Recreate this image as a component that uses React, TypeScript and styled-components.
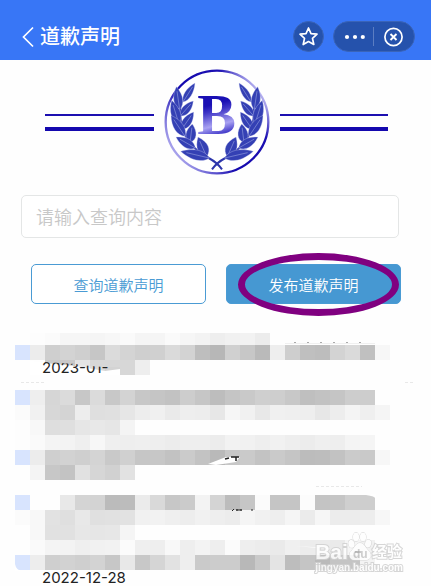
import React from 'react';
import styled, { createGlobalStyle } from 'styled-components';

const cjk = '"Noto Sans CJK SC", "Noto Sans", sans-serif';

const GlobalStyle = createGlobalStyle`
  * { box-sizing: border-box; }
  body { margin: 0; background: #fefefe; font-family: ${cjk}; overflow-x: hidden; }
  button, input { font-family: inherit; }
`;

const Page = styled.div`
  display: flex;
  flex-direction: column;
`;

const Header = styled.header`
  display: flex;
  align-items: center;
  justify-content: space-between;
  height: 60px;
  padding: 13px 16px 0 20px;
  background: #3876f6;
  color: #fff;
`;

const HeaderGroup = styled.div<{ $gap: number }>`
  display: flex;
  align-items: center;
  gap: ${(p) => p.$gap}px;
`;

const IconButton = styled.button<{ $width: number }>`
  display: flex;
  align-items: center;
  justify-content: center;
  width: ${(p) => p.$width}px;
  height: 31px;
  padding: 0;
  border: 0;
  background: transparent;
  color: #fff;
`;

const RoundButton = styled(IconButton)`
  border: 1px solid #3a64b8;
  border-radius: 50%;
  background: #2552ac;
`;

const Capsule = styled.div`
  display: flex;
  align-items: center;
  height: 31px;
  border: 1px solid #3a64b8;
  border-radius: 16px;
  background: #2552ac;
`;

const Divider = styled.span`
  width: 1px;
  height: 19px;
  background: #5b7dc2;
`;

const Title = styled.h1`
  margin: 0;
  padding-bottom: 2px;
  font-size: 20px;
  line-height: 30px;
  font-weight: 500;
`;

const Banner = styled.div`
  display: flex;
  align-items: center;
  gap: 10px;
  padding: 9px 43px 0 45px;
`;

const DoubleRule = styled.span`
  flex: 1;
  height: 17px;
  border-top: 2px solid #1c0fb0;
  border-bottom: 4px solid #1408ae;
`;

const Seal = styled.div`
  display: grid;
  place-items: center;
  width: 106px;
  height: 106px;
  > * { grid-area: 1 / 1; }
`;

const Monogram = styled.span`
  padding-bottom: 14px;
  font: bold 58px/60px "Liberation Serif", serif;
  color: transparent;
  background: linear-gradient(165deg, #1a10b4 28%, #3d34c6 36%, #a9a2f2 54%, #5048cf 64%, #1a10b4 74%);
  background-clip: text;
  -webkit-background-clip: text;
`;

const SearchForm = styled.form`
  display: flex;
  flex-direction: column;
  gap: 26px;
  padding: 20px 30px 0 21px;
`;

const SearchInput = styled.input`
  height: 43px;
  margin-right: 2px;
  padding: 0 14px 2px;
  border: 1px solid #e4e6e6;
  border-radius: 5px;
  background: #fff;
  font-size: 18px;
  color: #333;
  outline: 0;
  &::placeholder { color: #c8c8c8; font-weight: 350; opacity: 1; }
`;

const Actions = styled.div`
  display: grid;
  grid-template-columns: 1fr 1fr;
  gap: 20px;
  padding-left: 10px;
`;

const ActionButton = styled.button<{ $filled?: boolean }>`
  width: 100%;
  height: 40px;
  padding: 2px 0 0;
  border: 1px solid #4a9bd4;
  border-radius: 5px;
  background: ${(p) => (p.$filled ? '#4698d2' : '#fff')};
  color: ${(p) => (p.$filled ? '#fff' : '#4a9bd4')};
  font-size: 15px;
  line-height: 22px;
  font-weight: 350;
`;

const Marked = styled.div`
  position: relative;
`;

const Ring = styled.span`
  position: absolute;
  inset: -11px 2px -12px 12px;
  border: 7px solid #800080;
  border-radius: 50%;
  pointer-events: none;
`;

const Records = styled.section`
  position: relative;
  display: grid;
  grid-template-columns: repeat(25, 1fr);
  grid-template-rows: 12px repeat(15, 15px) 16px;
  margin-top: 29px;
  padding: 0 41px 0 15px;
`;

const Tile = styled.i<{ $tone: string; $row: number; $col: number }>`
  grid-row: ${(p) => p.$row};
  grid-column: ${(p) => p.$col};
  background: ${(p) => p.$tone};
`;

const RecordDate = styled.time<{ $row: number }>`
  position: relative;
  grid-row: ${(p) => p.$row};
  grid-column: 2 / 12;
  padding-left: 12px;
  font: 15px/15px Inter, sans-serif;
  color: #222;
  white-space: nowrap;
`;

const Smudges = styled.svg`
  position: absolute;
  left: 0;
  top: 0;
  pointer-events: none;
`;

const Watermark = styled.div`
  position: absolute;
  right: 28px;
  bottom: 11px;
  display: flex;
  flex-direction: column;
  color: #fff;
  font-family: "Liberation Sans", ${cjk};
  font-weight: bold;
  opacity: 0.85;
  paint-order: stroke fill;
  -webkit-text-stroke: 2px #d0d0d0;
`;

const MarkRow = styled.div`
  display: flex;
  align-items: flex-end;
  height: 29px;
`;

const MarkText = styled.span<{ $size: number }>`
  font-size: ${(p) => p.$size}px;
  line-height: 18px;
`;

const MarkUrl = styled.span`
  font-size: 10px;
  line-height: 14px;
`;

/* Two hex digits per tile, left to right; ".." leaves a tile empty, "bl" is the blue marker. */
const mosaic: string[] = [
  '.. fd fb f6 f6 f5 f7 fa f5 f5 fa f6 f3 ee f1 f2 ec',
  'bl ec cf d3 cf c6 db d4 cf d0 da d3 be b7 d0 c7 ba ee ce bf bd d3 da c0 f7',
  '.. .. c9 c9 e8 da d3 d7 ee',
  '',
  'bl ee d6 db c7 db c8 d3 c7 c5 c2 cd c6 bd c5 c9 cf ce c8 bf c2 c5 cd cd',
  'fb f1 d7 d4 ed df e0 e6 ed f0 ea ee ed e7 f6 f1 e8 f0 ef ee e7 ed f4 ef f5',
  'fd f8 de df e6 e8 e6 f4',
  'fd fa f4 f3 ef f7 ef ee ef ee ec ee ee ec f2 f1 ee f1 ee ec ef ee f4 f5',
  'bl ec cf d2 cf d4 c9 d0 c6 c7 c2 cb c3 b9 c7 ca c3 ca c5 bc bd c2 cb c9 f7',
  '.. f4 c7 c3 e1 d6 d1 e2',
  '',
  'bl .. .. e8 d4 d3 bb bc eb d9 c7 cb f3 d4 bc c6 fb c5 c5 fc c4 c5 cf ce',
  'fb f8 e2 df e8 e0 e1 e2 f1 f2 ef ed f1 ee ec f5 f1 ee f5 eb f6 ec ec ed f7',
  '.. f8 e1 e1 e7 e6 e7 f5',
  '.. fa f4 f3 ef f1 f2 fb ef ee f8 ee f3 ee fb ee ec ea f0 ec ec ea f5 f1',
  'bl ed cf d2 cf d3 c7 e8 c8 d5 e2 ee ca cc cc b8 c9 e4 bd c5 ba c4 c4 f3',
];

const tiles = mosaic.flatMap((line, r) =>
  line
    .split(' ')
    .map((t, c) => ({ t, row: r + 1, col: c + 1 }))
    .filter(({ t }) => t && t !== '..')
    .map(({ t, row, col }) => ({ row, col, tone: t === 'bl' ? '#d8e4fe' : `#${t}${t}${t}` })),
);

/* Laurel leaves: base x, base y, tip x, tip y, half width. */
const leaves = [
  [97, 126, 133, 69, 14],
  [87, 148, 77, 80, 18],
  [89, 168, 128, 123, 16],
  [85, 192, 63, 121, 19],
  [93, 208, 129, 156, 18],
  [103, 229, 61, 166, 19],
  [118, 248, 125, 192, 20],
  [134, 264, 76, 231, 18],
  [168, 290, 142, 231, 22],
  [176, 294, 90, 274, 20],
];

const leafPath = ([bx, by, tx, ty, w]: number[]) => {
  const dx = tx - bx;
  const dy = ty - by;
  const len = Math.hypot(dx, dy);
  const nx = (-dy / len) * w;
  const ny = (dx / len) * w;
  const at = (k: number, s: number) => `${bx + dx * k + nx * s} ${by + dy * k + ny * s}`;
  return `M${bx} ${by}C${at(0.2, 1)} ${at(0.6, 1)} ${tx} ${ty}C${at(0.6, -1)} ${at(0.2, -1)} ${bx} ${by}Z`;
};

const Branch = () => (
  <g>
    <path d="M89 135C82 205 112 262 174 294Q200 308 214 328" fill="none" stroke="#2c35ab" strokeWidth="6" />
    {leaves.map((l, i) => (
      <g key={i}>
        <path d={leafPath(l)} fill="#3440b4" stroke="#d4d8f6" strokeWidth="1" />
        <path
          d={`M${l[0]} ${l[1]}L${l[0] + (l[2] - l[0]) * 0.8} ${l[1] + (l[3] - l[1]) * 0.8}`}
          stroke="#8e98dd"
          strokeWidth="2"
        />
      </g>
    ))}
  </g>
);

const Emblem = () => (
  <svg width="106" height="106" viewBox="40 27 318 318" aria-hidden="true">
    <defs>
      <linearGradient id="rim" x1="0" y1="0.85" x2="1" y2="0.15">
        <stop offset="0" stopColor="#1408ae" />
        <stop offset="0.06" stopColor="#b3aef0" />
        <stop offset="0.22" stopColor="#6a62d4" />
        <stop offset="0.4" stopColor="#1408ae" />
        <stop offset="0.75" stopColor="#1c10b2" />
        <stop offset="0.93" stopColor="#c4c0f6" />
        <stop offset="1" stopColor="#1408ae" />
      </linearGradient>
    </defs>
    <circle cx="199" cy="186" r="154" fill="#fff" stroke="url(#rim)" strokeWidth="7" />
    <Branch />
    <g transform="matrix(-1 0 0 1 398 0)">
      <Branch />
    </g>
  </svg>
);

const Paw = () => (
  <svg width="24" height="29" viewBox="1 0 24 29" fill="#fff" stroke="#d0d0d0" aria-hidden="true">
    <ellipse cx="4.500" cy="12" rx="3" ry="4" transform="rotate(-15 4 12)" />
    <ellipse cx="9" cy="5" rx="3" ry="4.300" />
    <ellipse cx="16" cy="5" rx="3" ry="4.300" />
    <ellipse cx="21" cy="11.500" rx="3" ry="4" transform="rotate(15 21 12)" />
    <path d="M13 11C9 11 8 15 5 18C1 21 2 28 7 28H19C25 28 25 21 21 18C18 15 17 11 13 11Z" />
    <text x="6" y="26" fontSize="12" fill="#c8c8c8" strokeWidth="0">du</text>
    <path d="M8 20h6" stroke="#888" />
  </svg>
);

export default function App() {
  return (
    <Page>
      <GlobalStyle />
      <Header>
        <HeaderGroup $gap={4}>
          <IconButton $width={16} aria-label="返回">
            <svg width="14" height="22" viewBox="0 0 14 22" fill="none" stroke="#fff" strokeWidth="1.7">
              <path d="M12 1.500L2.500 11L12 20.500" />
            </svg>
          </IconButton>
          <Title>道歉声明</Title>
        </HeaderGroup>
        <HeaderGroup $gap={9}>
          <RoundButton $width={31} aria-label="收藏">
            <svg width="21" height="21" viewBox="0 0 21 21" fill="none" stroke="#fff" strokeWidth="1.7" strokeLinejoin="round">
              <path d="M10.500 2L13 7.600L19 8.200L14.500 12.300L15.800 18.500L10.500 15.600L5.200 18.500L6.500 12.300L2 8.200L8 7.600Z" />
            </svg>
          </RoundButton>
          <Capsule>
            <IconButton $width={39} aria-label="更多">
              <svg width="22" height="6" viewBox="0 0 22 6" fill="#fff">
                <circle cx="4" cy="3" r="2.1" />
                <circle cx="12" cy="3" r="2.1" />
                <circle cx="19.800" cy="3" r="2.1" />
              </svg>
            </IconButton>
            <Divider />
            <IconButton $width={40} aria-label="关闭">
              <svg width="20" height="20" viewBox="0 0 20 20" fill="none" stroke="#fff">
                <circle cx="9.500" cy="10" r="8.600" strokeWidth="1.700" />
                <path d="M6.500 7L12.500 13M12.500 7L6.500 13" strokeWidth="1.900" />
              </svg>
            </IconButton>
          </Capsule>
        </HeaderGroup>
      </Header>
      <Banner>
        <DoubleRule />
        <Seal>
          <Emblem />
          <Monogram>B</Monogram>
        </Seal>
        <DoubleRule />
      </Banner>
      <SearchForm onSubmit={(e) => e.preventDefault()}>
        <SearchInput type="text" aria-label="请输入查询内容" placeholder="请输入查询内容" />
        <Actions>
          <ActionButton type="submit">查询道歉声明</ActionButton>
          <Marked>
            <ActionButton type="button" $filled>发布道歉声明</ActionButton>
            <Ring />
          </Marked>
        </Actions>
      </SearchForm>
      <Records>
        {tiles.map((t) => (
          <Tile key={`${t.row}-${t.col}`} $tone={t.tone} $row={t.row} $col={t.col} />
        ))}
        <Smudges width="431" height="253" viewBox="0 333 431 253" aria-hidden="true">
          <path d="M30 361L45 363L75 366L105 371L120 369V375H30Z" fill="#fff" />
          <path d="M208 464L226 457L240 457L236 462L216 465Z" fill="#fff" />
          <path d="M366 495Q375 496 376 499V494Z M295 546L330 548V549Z M15 564Q16 570 22 571H15Z" fill="#fff" />
          <path d="M231 457H239M236 457V461M225 459L229 458" stroke="#222" strokeWidth="1.5" />
          <path d="M232 511L234 509M236 510H242M237 509V511M241 509V511M251 510H253" stroke="#222" />
          <path d="M294 342.500H372" stroke="#aaa" strokeDasharray="2 11" />
          <path d="M285 343.500H375" stroke="#f0f0f0" />
          <path d="M21 382.500H44M405 382.500H413M316 486.500H362" stroke="#e8e8e8" strokeDasharray="3 2" />
        </Smudges>
        <RecordDate $row={3}>2023-01-</RecordDate>
        <RecordDate $row={17}>2022-12-28</RecordDate>
        <Smudges width="431" height="253" viewBox="0 333 431 253" aria-hidden="true">
          <path d="M45 360H75V364L45 362Z" fill="#c9c9c9" />
          <path d="M75 360H90V366L75 364Z" fill="#e4e4e4" />
          <path d="M90 360H120V367L104 367L90 366Z" fill="#d7d7d7" />
          <path d="M100 374L112 371V373L104 375Z" fill="#fff" />
        </Smudges>
        <Watermark>
          <MarkRow>
            <MarkText $size={21}>Bai</MarkText>
            <Paw />
            <MarkText $size={15}>经验</MarkText>
          </MarkRow>
          <MarkUrl>jingyan.baidu.com</MarkUrl>
        </Watermark>
      </Records>
    </Page>
  );
}
